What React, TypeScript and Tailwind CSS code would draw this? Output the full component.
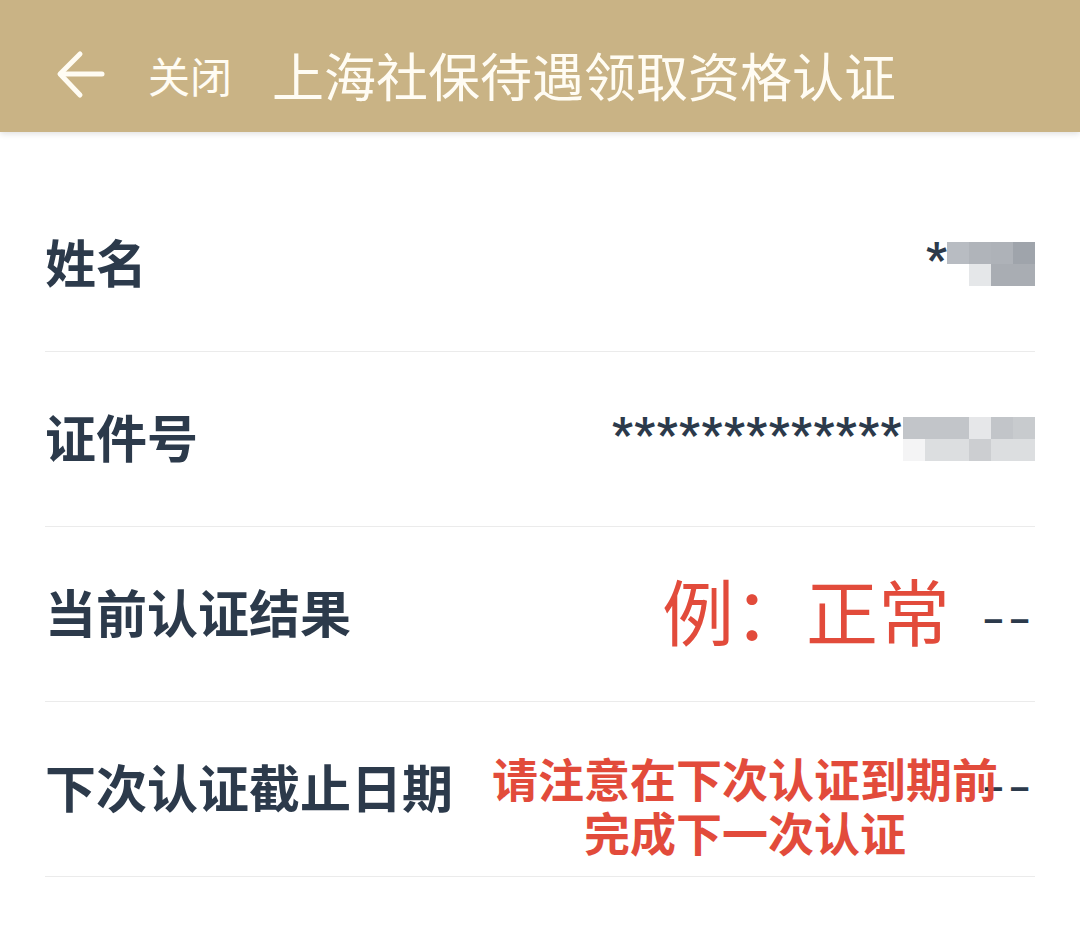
import React from "react";

const nameBlur: (string | null)[][] = [
  ["#b8bcc2", "#b0b4ba", "#aeb2b8", "#9fa4ab"],
  [null, "#e5e7e9", "#a9adb3", "#a9adb3"],
];

const idBlur: (string | null)[][] = [
  ["#c2c5c9", "#c2c5c9", "#c2c5c9", "#e6e7e9", "#c2c5c9", "#c8cbce"],
  ["#f4f4f5", "#dcdee0", "#dcdee0", "#ccced1", "#dcdee0", "#dcdee0"],
];

function Mosaic({ cells }: { cells: (string | null)[][] }) {
  return (
    <div className="flex flex-col">
      {cells.map((row, i) => (
        <div key={i} className="flex">
          {row.map((c, j) => (
            <div
              key={j}
              className="h-[22px] w-[22px]"
              style={{ backgroundColor: c ?? "transparent" }}
            />
          ))}
        </div>
      ))}
    </div>
  );
}

function Dashes({ className = "" }: { className?: string }) {
  return (
    <span className={`font-['Roboto'] text-[34px] font-bold leading-none tracking-[5px] text-[#2c3a4b] ${className}`}>
      ––
    </span>
  );
}

function Row({ label, children }: { label: string; children?: React.ReactNode }) {
  return (
    <div className="relative flex h-[175px] items-center justify-between border-b border-[#ebebeb]">
      <span className="mt-[-6px] text-[51px] font-bold text-[#2c3a4b]">{label}</span>
      {children}
    </div>
  );
}

export default function App() {
  return (
    <div
      className="min-h-[950px] w-[1080px] bg-white"
      style={{ fontFamily: '"Noto Sans CJK SC", "Noto Sans", sans-serif' }}
    >
      <header className="flex h-[132px] items-center bg-[#c9b385] pl-[56px] pt-[18px] text-[#fffcf3] shadow-[0_2px_6px_rgba(0,0,0,0.12)]">
        <svg width="50" height="50" viewBox="0 0 50 50" fill="none" stroke="currentColor" strokeWidth="5" strokeLinecap="round" strokeLinejoin="round">
          <path d="M46 24H6" />
          <path d="M24 4L4 24L24 45" />
        </svg>
        <span className="ml-[42px] text-[42px] leading-none">关闭</span>
        <span className="ml-[40px] text-[52px] leading-none">上海社保待遇领取资格认证</span>
      </header>

      <main className="px-[45px] pt-[45px]">
        <Row label="姓名">
          <div className="flex items-start">
            <span className="mt-[-6px] font-['Roboto'] text-[46px] font-bold leading-none text-[#2c3a4b]">*</span>
            <Mosaic cells={nameBlur} />
          </div>
        </Row>
        <Row label="证件号">
          <div className="flex items-start">
            <span className="mt-[-6px] font-['Roboto'] text-[46px] font-bold leading-none tracking-[1.5px] text-[#2c3a4b]">
              *************
            </span>
            <Mosaic cells={idBlur} />
          </div>
        </Row>
        <Row label="当前认证结果">
          <div className="flex items-center gap-[32px]">
            <span className="mt-[-10px] text-[72px] leading-none text-[#e24b3b]">例：正常</span>
            <Dashes className="mt-[14px]" />
          </div>
        </Row>
        <Row label="下次认证截止日期">
          <Dashes />
          <div className="absolute left-[445px] top-[48px] w-[510px] text-center text-[46px] font-bold leading-[54px] text-[#e24b3b]">
            请注意在下次认证到期前
            <br />
            完成下一次认证
          </div>
        </Row>
      </main>
    </div>
  );
}
